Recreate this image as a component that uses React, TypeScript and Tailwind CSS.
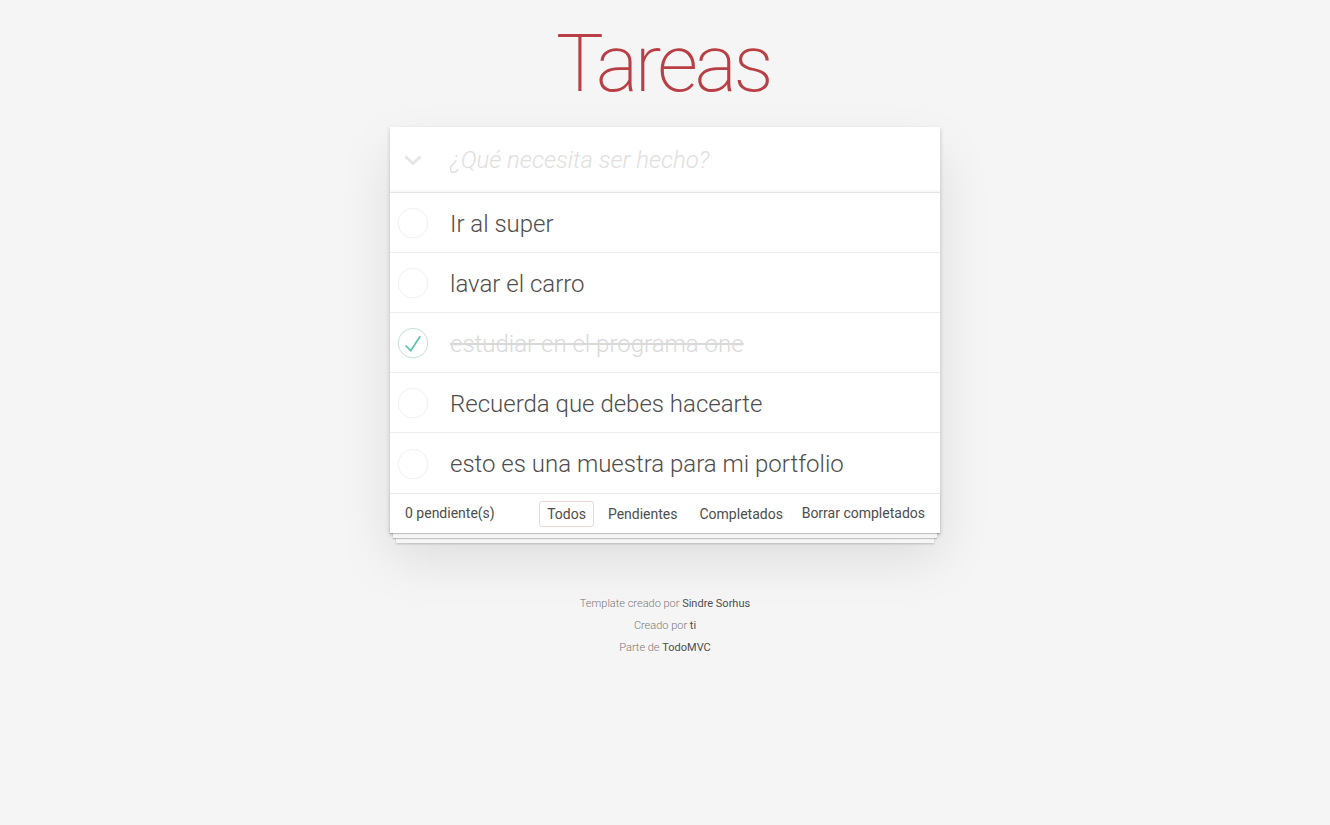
import { useState } from 'react';

interface Todo {
  id: number;
  title: string;
  completed: boolean;
}

const INITIAL: Todo[] = [
  { id: 1, title: 'Ir al super', completed: false },
  { id: 2, title: 'lavar el carro', completed: false },
  { id: 3, title: 'estudiar en el programa one', completed: true },
  { id: 4, title: 'Recuerda que debes hacearte', completed: false },
  { id: 5, title: 'esto es una muestra para mi portfolio', completed: false },
];

const FILTERS = ['Todos', 'Pendientes', 'Completados'];

function Toggle({ checked }: { checked: boolean }) {
  return (
    <svg width="40" height="40" viewBox="-10 -18 100 135" className="shrink-0">
      <circle
        cx="50"
        cy="50"
        r="50"
        fill="none"
        stroke={checked ? '#bddad5' : '#ededed'}
        strokeWidth="3"
      />
      {checked && <path fill="#5dc2af" d="M72 25L42 71 27 56l-4 4 20 20 34-52z" />}
    </svg>
  );
}

export default function App() {
  const [todos, setTodos] = useState<Todo[]>(INITIAL);
  const [filter, setFilter] = useState('Todos');

  const toggle = (id: number) =>
    setTodos((list) => list.map((t) => (t.id === id ? { ...t, completed: !t.completed } : t)));

  return (
    <div className="min-h-screen bg-[#f5f5f5] font-['Roboto','Liberation_Sans',sans-serif] font-light text-[#4d4d4d] antialiased">
      <div className="mx-auto w-[550px] pt-[24px]">
        <h1 className="mb-[23px] pr-[4px] text-center text-[80px] font-[200] leading-[80px] tracking-[-3.5px] text-[#b83f45]">
          Tareas
        </h1>

        <section className="bg-white shadow-[0_2px_4px_0_rgba(0,0,0,0.2),0_25px_50px_0_rgba(0,0,0,0.1)]">
          <div className="flex h-[65px] items-center shadow-[inset_0_-2px_1px_rgba(0,0,0,0.03)]">
            <div className="flex w-[46px] shrink-0 justify-center pt-[2px]">
              <svg width="18" height="11" viewBox="0 0 18 11">
                <path d="M1.5 1.5 L9 8.5 L16.5 1.5" fill="none" stroke="#e6e6e6" strokeWidth="3" />
              </svg>
            </div>
            <input
              autoFocus
              className="ml-[14px] h-full flex-1 bg-transparent pr-4 text-[24px] text-[#4d4d4d] outline-none placeholder:font-light placeholder:italic placeholder:text-[#e0e0e0]"
              placeholder="¿Qué necesita ser hecho?"
            />
          </div>

          <ul className="border-t border-[#e6e6e6]">
            {todos.map((t) => (
              <li
                key={t.id}
                className="flex h-[60px] items-center border-b border-[#ededed] last:border-b-0"
              >
                <button type="button" onClick={() => toggle(t.id)} className="mt-[1px]">
                  <Toggle checked={t.completed} />
                </button>
                <span
                  className={`ml-[20px] pt-[3px] text-[24px] leading-[29px] ${
                    t.completed ? 'text-[#d9d9d9] line-through' : 'text-[#4d4d4d]'
                  }`}
                >
                  {t.title}
                </span>
              </li>
            ))}
          </ul>

          <footer className="grid h-[40px] grid-cols-[1fr_auto_1fr] items-center border-t border-[#e6e6e6] px-[15px] text-[14px] font-normal text-[#4d4d4d] shadow-[0_1px_1px_rgba(0,0,0,0.2),0_8px_0_-3px_#f6f6f6,0_9px_1px_-3px_rgba(0,0,0,0.2),0_16px_0_-6px_#f6f6f6,0_17px_2px_-6px_rgba(0,0,0,0.2)]">
            <span>0 pendiente(s)</span>
            <ul className="flex">
              {FILTERS.map((f) => (
                <li key={f}>
                  <button
                    type="button"
                    onClick={() => setFilter(f)}
                    className={`m-[3px] rounded-[3px] border px-[7px] py-[3px] leading-[18px] ${
                      filter === f ? 'border-[rgba(175,47,47,0.2)]' : 'border-transparent'
                    }`}
                  >
                    {f}
                  </button>
                </li>
              ))}
            </ul>
            <button type="button" className="justify-self-end">
              Borrar completados
            </button>
          </footer>
        </section>

        <footer className="mt-[65px] text-center text-[11px] leading-[11px] text-[#777] [text-shadow:0_1px_0_rgba(255,255,255,0.5)]">
          <p className="mb-[11px]">
            Template creado por <a className="font-normal text-[#4d4d4d]">Sindre Sorhus</a>
          </p>
          <p className="mb-[11px]">
            Creado por <a className="font-normal text-[#4d4d4d]">ti</a>
          </p>
          <p>
            Parte de <a className="font-normal text-[#4d4d4d]">TodoMVC</a>
          </p>
        </footer>
      </div>
    </div>
  );
}
